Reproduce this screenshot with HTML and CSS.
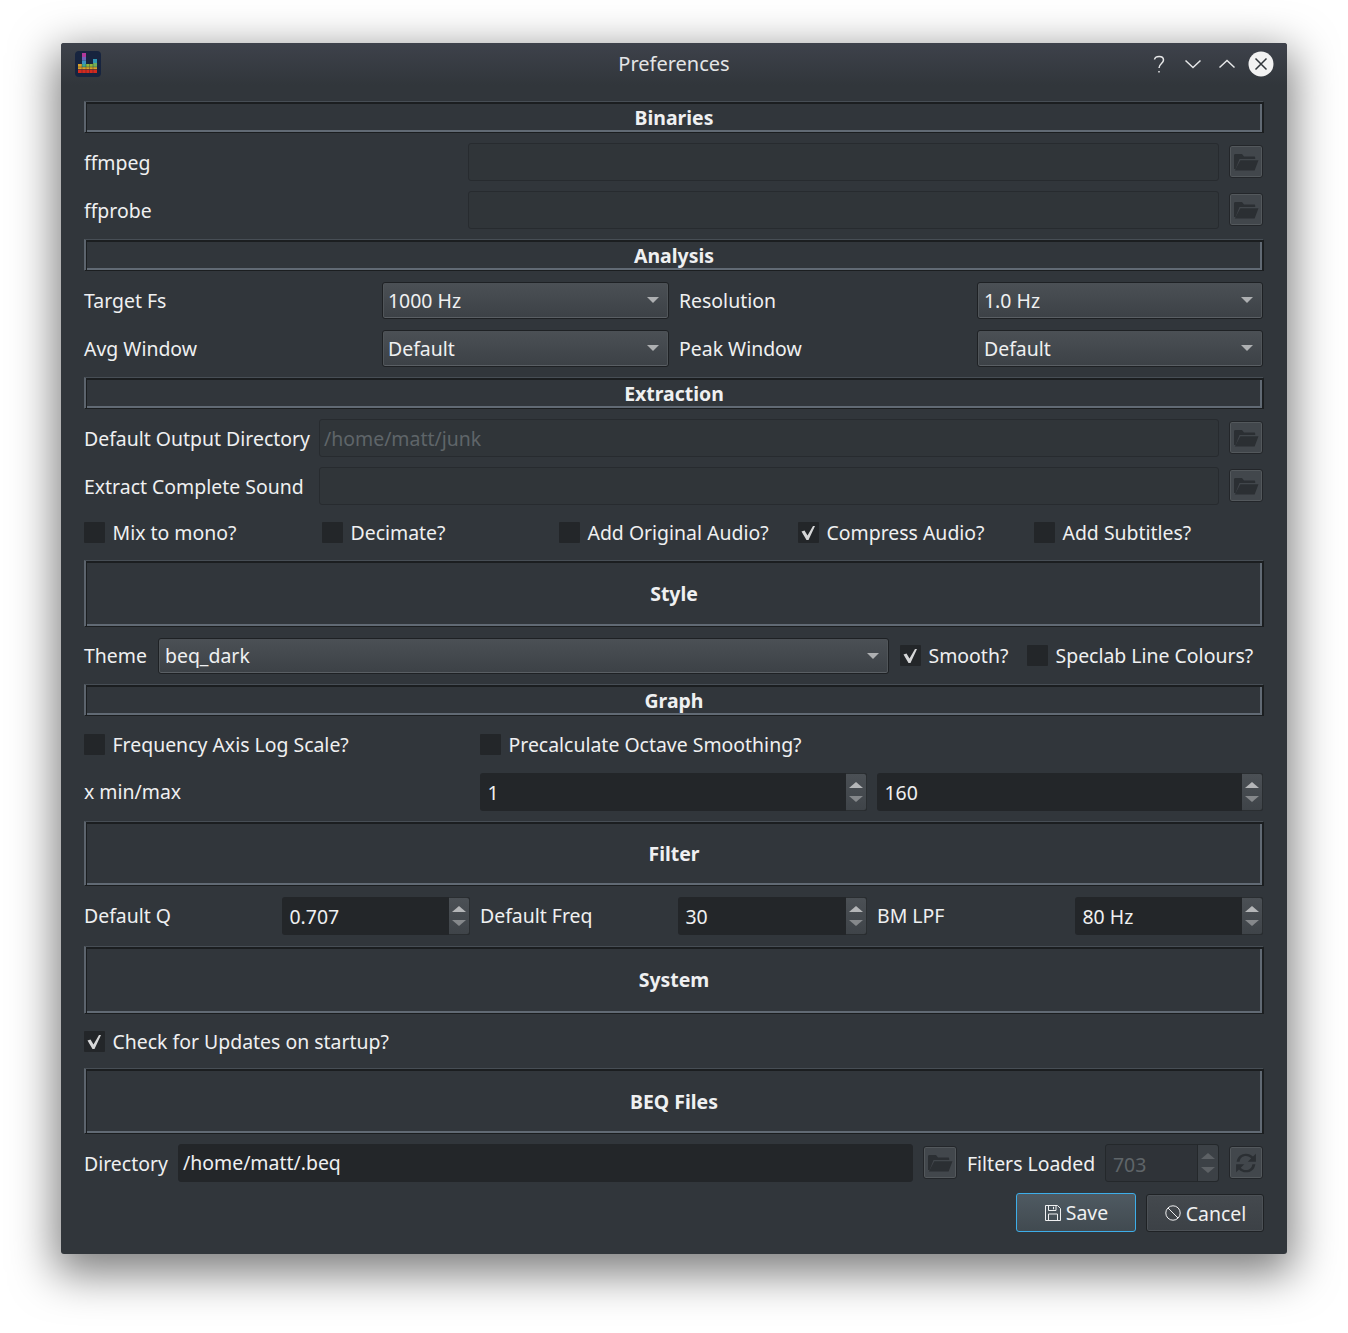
FILE: index.html
```html
<!DOCTYPE html>
<html lang="en">
<head>
  <meta charset="UTF-8">
  <meta name="viewport" content="width=device-width, initial-scale=1.0">
  <title>Preferences</title>
  <link rel="stylesheet" href="styles.css">
</head>
<body>
  <!-- shared icons -->
  <svg class="defs" width="0" height="0">
    <symbol id="folder" viewBox="0 0 26 20">
      <path d="M1 17V3.500C1 2.500 1.600 2 2.500 2H9l2 2.500h10c.8 0 1.200.5 1.200 1.200V7H6.500L2.600 17z"/>
      <path d="M7.300 8.200H25.500L21.600 18.500H1.800z"/>
    </symbol>
    <symbol id="check" viewBox="0 0 21 21">
      <path d="M3.500 9.500L6.500 8.500L9.500 13.500L15 4H17L10.500 18H8.500z"/>
    </symbol>
  </svg>

  <div class="window">
    <!-- title bar -->
    <div class="titlebar">
      <svg class="app-icon" viewBox="0 0 26 26">
        <rect width="26" height="26" rx="4" fill="#17243f"/>
        <rect x="7" y="2" width="4" height="4" fill="#b0389a"/>
        <rect x="7" y="6" width="4" height="3.500" fill="#6d62b8"/>
        <rect x="7" y="9.500" width="4" height="3.500" fill="#3a8fc0"/>
        <rect x="18" y="8" width="4" height="4" fill="#2f96b4"/>
        <rect x="3" y="13" width="4" height="3" fill="#d9a02a"/>
        <rect x="7" y="13" width="4" height="3" fill="#3fa98c"/>
        <rect x="11" y="13" width="7" height="3" fill="#8fb53a"/>
        <rect x="18" y="12" width="4" height="4" fill="#6fae5a"/>
        <rect x="3" y="16" width="19" height="2.500" fill="#d8a426"/>
        <rect x="3" y="18.500" width="19" height="3.500" fill="#d32a1e"/>
        <path d="M7 13v9M11 13v9M14.500 13v9M18 12v10M3 16h19M3 18.500h19" stroke="#17243f" stroke-width=".6" opacity=".6"/>
      </svg>
      <span class="title">Preferences</span>
      <div class="win-buttons">
        <svg class="win-btn" viewBox="0 0 24 24"><path d="M7.500 7.500C8 3.500 16.500 3 16.500 8c0 3.500-4.500 3.500-4.500 8" /><path d="M12 19v1.600"/></svg>
        <svg class="win-btn" viewBox="0 0 24 24"><path d="M4.500 8.500L12 15.500L19.500 8.500"/></svg>
        <svg class="win-btn" viewBox="0 0 24 24"><path d="M4.500 15.500L12 8.500L19.500 15.500"/></svg>
        <svg class="win-close" viewBox="0 0 26 26"><circle cx="13" cy="13" r="12.500" fill="#f2f2f2"/><path d="M7.500 7.500L18.500 18.500M18.500 7.500L7.500 18.500" stroke="#31363b" stroke-width="1.500"/></svg>
      </div>
    </div>

    <div class="content">
      <div class="head">Binaries</div>
      <div class="row path-row">
        <label>ffmpeg</label>
        <div class="field"></div>
        <div class="tool-btn"><svg class="folder"><use href="#folder"/></svg></div>
      </div>
      <div class="row path-row">
        <label>ffprobe</label>
        <div class="field"></div>
        <div class="tool-btn"><svg class="folder"><use href="#folder"/></svg></div>
      </div>

      <div class="head">Analysis</div>
      <div class="row four-col">
        <label>Target Fs</label>
        <div class="combo">1000 Hz</div>
        <label>Resolution</label>
        <div class="combo">1.0 Hz</div>
      </div>
      <div class="row four-col">
        <label>Avg Window</label>
        <div class="combo">Default</div>
        <label>Peak Window</label>
        <div class="combo">Default</div>
      </div>

      <div class="head">Extraction</div>
      <div class="row path-row extract-row">
        <label>Default Output Directory</label>
        <div class="field placeholder">/home/matt/junk</div>
        <div class="tool-btn"><svg class="folder"><use href="#folder"/></svg></div>
      </div>
      <div class="row path-row extract-row">
        <label>Extract Complete Sound</label>
        <div class="field"></div>
        <div class="tool-btn"><svg class="folder"><use href="#folder"/></svg></div>
      </div>
      <div class="row-checks five-col">
        <div class="check"><span class="box"></span>Mix to mono?</div>
        <div class="check"><span class="box"></span>Decimate?</div>
        <div class="check"><span class="box"></span>Add Original Audio?</div>
        <div class="check"><span class="box"><svg class="tick"><use href="#check"/></svg></span>Compress Audio?</div>
        <div class="check"><span class="box"></span>Add Subtitles?</div>
      </div>

      <div class="head style-head">Style</div>
      <div class="row theme-row">
        <label>Theme</label>
        <div class="combo">beq_dark</div>
        <div class="check"><span class="box"><svg class="tick"><use href="#check"/></svg></span>Smooth?</div>
        <div class="check"><span class="box"></span>Speclab Line Colours?</div>
      </div>

      <div class="head">Graph</div>
      <div class="row-checks graph-checks three-col">
        <div class="check"><span class="box"></span>Frequency Axis Log Scale?</div>
        <div class="check"><span class="box"></span>Precalculate Octave Smoothing?</div>
      </div>
      <div class="row three-col">
        <label>x min/max</label>
        <div class="spin"><span class="spin-value">1</span><span class="stepper"><i class="up"></i><i class="down"></i></span></div>
        <div class="spin"><span class="spin-value">160</span><span class="stepper"><i class="up"></i><i class="down"></i></span></div>
      </div>

      <div class="head filter-head">Filter</div>
      <div class="row filter-row six-col">
        <label>Default Q</label>
        <div class="spin"><span class="spin-value">0.707</span><span class="stepper"><i class="up"></i><i class="down"></i></span></div>
        <label>Default Freq</label>
        <div class="spin"><span class="spin-value">30</span><span class="stepper"><i class="up"></i><i class="down"></i></span></div>
        <label>BM LPF</label>
        <div class="spin"><span class="spin-value">80 Hz</span><span class="stepper"><i class="up"></i><i class="down"></i></span></div>
      </div>

      <div class="head system-head">System</div>
      <div class="row-checks update-check">
        <div class="check"><span class="box"><svg class="tick"><use href="#check"/></svg></span>Check for Updates on startup?</div>
      </div>

      <div class="head beq-head">BEQ Files</div>
      <div class="row beq-row">
        <label>Directory</label>
        <div class="field dark">/home/matt/.beq</div>
        <div class="tool-btn"><svg class="folder"><use href="#folder"/></svg></div>
        <label>Filters Loaded</label>
        <div class="spin disabled"><span class="spin-value">703</span><span class="stepper"><i class="up"></i><i class="down"></i></span></div>
        <div class="tool-btn">
          <svg class="refresh" viewBox="0 0 24 24"><path d="M4 11c.5-4.500 4-7 8-7 2.500 0 4.500 1 6 2.500L20.500 4v7h-7l3-3c-1-1.200-2.700-2-4.500-2-3 0-5 1.800-5.500 5zM20 13c-.5 4.500-4 7-8 7-2.500 0-4.500-1-6-2.500L3.500 20v-7h7l-3 3c1 1.200 2.700 2 4.500 2 3 0 5-1.800 5.500-5z"/></svg>
        </div>
      </div>

      <div class="actions">
        <div class="btn focused">
          <svg class="btn-icon" viewBox="0 0 16 16"><path d="M.5.5h12l3 3v12H.5zM3.500.5v5h7.500v-5M3.500 15.500V9h9v6.500M8.500 1.800v2.500"/></svg>Save
        </div>
        <div class="btn">
          <svg class="btn-icon" viewBox="0 0 16 16"><circle cx="8" cy="8" r="7.200"/><path d="M3 3l10 10"/></svg>Cancel
        </div>
      </div>
    </div>
  </div>
</body>
</html>
```

FILE: styles.css
```css
/* Reset */
* {
  margin: 0;
  padding: 0;
  box-sizing: border-box;
}
body {
  background: #fff;
  padding: 43px 61px 0;
  font-family: "Noto Sans", sans-serif;
  font-size: 19.45px;
  color: #eff0f1;
  height: 1333px;
  overflow: hidden;
}
.defs {
  position: absolute;
}
/* Window */
.window {
  width: 1226px;
  height: 1211px;
  background: #31363b;
  border-radius: 3px;
  box-shadow: 0 14px 44px 6px rgba(0, 0, 0, 0.5);
}
.titlebar {
  height: 42px;
  display: flex;
  align-items: center;
  padding: 0 13px 0 14px;
  position: relative;
  background: linear-gradient(#3e424b, #31363b);
  border-radius: 3px 3px 0 0;
}
.app-icon {
  width: 26px;
  height: 26px;
}
.title {
  position: absolute;
  left: 0;
  right: 0;
  top: 7px;
  text-align: center;
  font-size: 20px;
  color: #e4e5e6;
}
.win-buttons {
  margin-left: auto;
  display: flex;
  align-items: center;
  gap: 10px;
}
.win-btn {
  width: 24px;
  height: 24px;
  fill: none;
  stroke: #e6e7e8;
  stroke-width: 1.5;
}
.win-close {
  width: 26px;
  height: 26px;
  margin-left: -1px;
}
/* Content */
.content {
  padding: 16px 23px 22px;
  display: flex;
  flex-direction: column;
  gap: 10px;
}
/* Sunken section frame: light left and bottom, dark top and right */
.head {
  height: 32px;
  display: flex;
  align-items: center;
  justify-content: center;
  font-weight: 700;
  border: 1px solid;
  border-color: #474e55 #1b1e20 #1b1e20 #5c646d;
  box-shadow:
    inset 1px 0 0 #5c646d,
    inset 2px 2px 0 #1b1e20,
    inset -1px 0 0 #1b1e20,
    inset -3px -2px 0 #616a74;
}
.style-head { height: 67px; }
.filter-head { height: 65px; }
.system-head { height: 68px; padding-bottom: 2px; }
.beq-head { height: 66px; }

.row {
  height: 38px;
  display: grid;
  column-gap: 10px;
  align-items: center;
}
.path-row { grid-template-columns: 374px 751px 34px; }
.extract-row { grid-template-columns: 225px 900px 34px; }
.four-col { grid-template-columns: 288px 287px 288px 286px; }
.three-col { grid-template-columns: 386px 387px 386px; }
.six-col { grid-template-columns: 188px 188px 188px 189px 188px 188px; }
.theme-row { height: 37px; grid-template-columns: 64px 731px 117px 1fr; }
.beq-row { grid-template-columns: 84px 735px 34px 128px 114px 34px; }
.filter-row { height: 40px; }
.row-checks {
  height: 35px;
  display: grid;
  column-gap: 10px;
  align-items: center;
}
.five-col { grid-template-columns: 228px 227px 229px 226px 229px; }
.graph-checks { height: 37px; padding-bottom: 1px; }
.update-check { height: 34px; }
.row label {
  line-height: 1;
  white-space: nowrap;
}
.path-row label,
.four-col label,
.beq-row label {
  padding-top: 2px;
}
/* Line edits */
.field {
  height: 38px;
  line-height: 38px;
  padding-left: 4px;
  border: 1px solid #272b2f;
  border-radius: 3px;
  background: #303539;
}
.field.placeholder { color: #5f6569; }
.field.dark {
  line-height: 36px;
  background: #232629;
  border-color: #232629;
}
/* Small tool buttons */
.tool-btn {
  width: 34px;
  height: 33px;
  align-self: start;
  margin-top: 2px;
  display: flex;
  align-items: center;
  justify-content: center;
  border: 1px solid #23262a;
  border-radius: 3px;
  background: #42474c;
  box-shadow: inset 0 0 0 1px #53585c;
}
.folder {
  width: 26px;
  height: 20px;
  fill: #2b2f33;
}
.refresh {
  width: 28px;
  height: 28px;
  fill: #2b2f33;
}
/* Combo boxes */
.combo {
  height: 37px;
  margin-top: 1px;
  line-height: 35px;
  padding-left: 5px;
  position: relative;
  border: 1px solid #1e2124;
  border-radius: 3px;
  background: linear-gradient(#4b5055, #3c4146);
  box-shadow: inset 0 -1px 0 #5a5f64, inset 1px 0 0 #505559, inset -1px 0 0 #505559;
}
.combo::after {
  content: "";
  position: absolute;
  right: 9px;
  top: 14px;
  border-left: 6px solid transparent;
  border-right: 6px solid transparent;
  border-top: 6px solid #aeb0b2;
}
.four-col .combo:last-child { padding-left: 6px; }
.theme-row .combo {
  height: 36px;
  line-height: 34px;
  padding-left: 6px;
  align-self: start;
}
/* Check boxes */
.check {
  display: flex;
  align-items: center;
  gap: 7.5px;
  white-space: nowrap;
}
.box {
  width: 21px;
  height: 21px;
  flex: none;
  background: #232629;
  border-radius: 1px;
}
.tick {
  display: block;
  width: 21px;
  height: 21px;
  fill: #d6d7d8;
}
.theme-row .check {
  padding-left: 1px;
  margin-bottom: 1px;
}
/* Spin boxes */
.spin {
  height: 38px;
  display: flex;
  background: #232629;
  border-radius: 3px;
}
.spin-value {
  flex: 1;
  padding-left: 7.5px;
  line-height: 40px;
}
.stepper {
  width: 21px;
  display: flex;
  flex-direction: column;
  align-items: center;
  justify-content: center;
  gap: 8px;
  border: 1px solid #2a2e31;
  border-left: 0;
  border-radius: 0 3px 3px 0;
  background: linear-gradient(#4b5055, #3f4449);
}
.stepper i {
  border-left: 7px solid transparent;
  border-right: 7px solid transparent;
}
.stepper .up { border-bottom: 6px solid #b4b6b8; }
.stepper .down { border-top: 6px solid #85888b; }
.spin.disabled {
  background: #2f3338;
  border: 1px solid #24282b;
}
.spin.disabled .spin-value { color: #5f6569; padding-left: 7px; }
.spin.disabled .stepper { background: #3c4146; border: 0; border-left: 1px solid #24282b; }
.spin.disabled .up { border-bottom-color: #5d6165; }
.spin.disabled .down { border-top-color: #5d6165; }
/* Dialog buttons */
.actions {
  height: 40px;
  display: flex;
  justify-content: flex-end;
  align-items: flex-end;
  gap: 10px;
}
.btn {
  width: 118px;
  height: 38px;
  display: flex;
  align-items: center;
  justify-content: center;
  gap: 5px;
  padding-left: 1px;
  border: 1px solid #1f2225;
  border-radius: 3px;
  background: linear-gradient(#44494e, #3c4146);
  box-shadow: inset 0 0 0 1px #4c5156;
}
.btn.focused {
  width: 120px;
  height: 39px;
  border-color: #3daee9;
  background: linear-gradient(#4f5a62, #414a50);
  box-shadow: none;
}
.btn-icon {
  width: 16px;
  height: 16px;
  fill: none;
  stroke: #eff0f1;
  stroke-width: 1;
}
```
